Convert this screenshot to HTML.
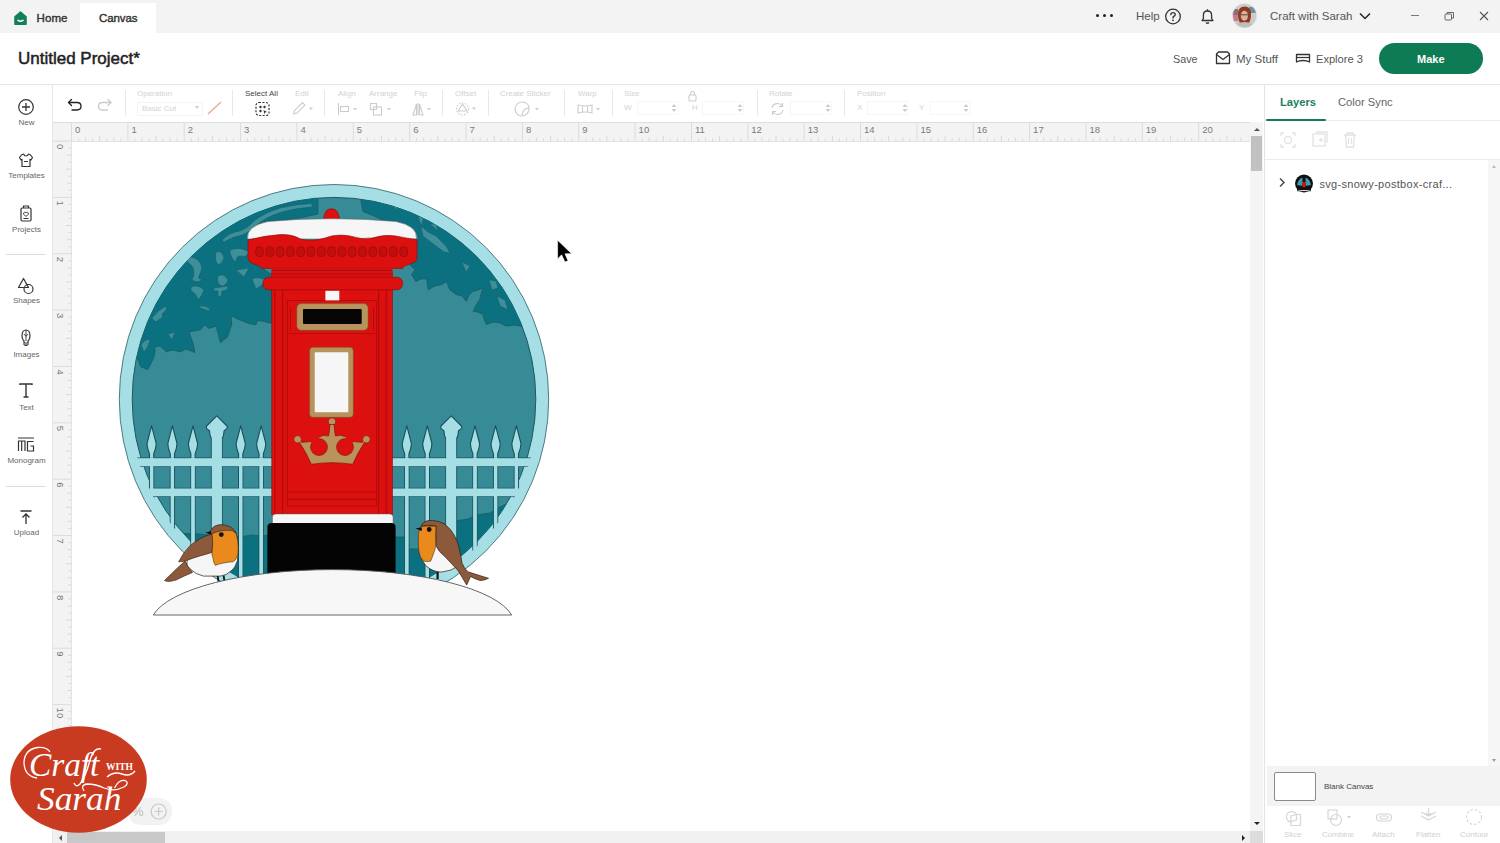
<!DOCTYPE html>
<html><head><meta charset="utf-8">
<style>
*{box-sizing:border-box;margin:0;padding:0}
html,body{width:1500px;height:843px;overflow:hidden;background:#fff;font-family:"Liberation Sans",sans-serif;color:#333}
.a{position:absolute}
.t{position:absolute;white-space:nowrap;line-height:1}
#top{left:0;top:0;width:1500px;height:33px;background:#f3f3f3}
#hdr{left:0;top:33px;width:1500px;height:52px;background:#fff;border-bottom:1px solid #e4e4e4;box-shadow:0 0.5px 1.5px rgba(0,0,0,0.06)}
#tb{left:53px;top:85px;width:1212px;height:37px;background:#fff}
#lp{left:0;top:85px;width:53px;height:759px;background:#fff;border-right:1px solid #e6e6e6}
.lbl{font-size:8px;color:#666;text-align:center;width:53px;left:0}
.tl{font-size:8px;color:#d2d2d2}
.sep{position:absolute;top:90px;width:1px;height:26px;background:#e8e8e8}
</style></head><body>
<!-- top bar -->
<div id="top" class="a"></div>
<div class="a" style="left:80px;top:3px;width:76px;height:30px;background:#fff"></div>
<svg class="a" style="left:13px;top:10px" width="16" height="16" viewBox="0 0 16 16"><path d="M2 6.8 L7.5 2 L13 6.8 V14.2 H2 Z" fill="#12805a" stroke="#12805a" stroke-linejoin="round" stroke-width="1.6"/><path d="M5 10.3 Q7.5 12 10 10.3" stroke="#fff" stroke-width="1.5" fill="none" stroke-linecap="round"/></svg>
<div class="t" style="left:36.5px;top:13px;font-size:11.5px;color:#333;-webkit-text-stroke:0.4px #333;letter-spacing:0.1px">Home</div>
<div class="t" style="left:99px;top:13px;font-size:11.5px;color:#333;-webkit-text-stroke:0.4px #333;letter-spacing:-0.1px">Canvas</div>

<div class="a" style="left:1096px;top:14px;width:3.4px;height:3.4px;border-radius:50%;background:#222"></div>
<div class="a" style="left:1103px;top:14px;width:3.4px;height:3.4px;border-radius:50%;background:#222"></div>
<div class="a" style="left:1109.5px;top:14px;width:3.4px;height:3.4px;border-radius:50%;background:#222"></div>
<div class="t" style="left:1136px;top:11px;font-size:11.5px;color:#555">Help</div>
<svg class="a" style="left:1164px;top:8px" width="18" height="18" viewBox="0 0 18 18"><circle cx="9" cy="8.5" r="7.3" fill="none" stroke="#333" stroke-width="1.3"/><path d="M6.8 6.6 Q6.9 4.6 9 4.6 Q11.2 4.6 11.2 6.5 Q11.2 7.8 9.6 8.5 Q9 8.8 9 10" fill="none" stroke="#333" stroke-width="1.4" stroke-linecap="round"/><circle cx="9" cy="12.3" r="0.9" fill="#333"/></svg>
<svg class="a" style="left:1199px;top:8px" width="17" height="17" viewBox="0 0 17 17"><path d="M3 12.5 H14 L12.6 10.5 V7 Q12.6 3 8.5 3 Q4.4 3 4.4 7 V10.5 Z" fill="none" stroke="#333" stroke-width="1.3" stroke-linejoin="round"/><path d="M7 14.5 Q8.5 16 10 14.5" fill="none" stroke="#333" stroke-width="1.3"/><path d="M8.5 1.2 V3" stroke="#333" stroke-width="1.3"/></svg>
<svg class="a" style="left:1232px;top:3px" width="26" height="26" viewBox="0 0 26 26"><defs><clipPath id="av"><circle cx="12.6" cy="12.7" r="12.2"/></clipPath></defs><g clip-path="url(#av)"><rect width="26" height="26" fill="#cfc9ca"/><rect x="0" y="6" width="6" height="6" fill="#8b6e76"/><rect x="17" y="4" width="7" height="6" fill="#6f8ea0"/><rect x="1" y="12" width="5" height="6" fill="#c77b86"/><path d="M6 11 Q6 3.5 12.6 3.5 Q19 3.5 19 11 Q19 17 17 20 H8 Q6 17 6 11 Z" fill="#8d3b1f"/><ellipse cx="12.4" cy="12.8" rx="3.6" ry="5" fill="#dcaea0"/><path d="M9 11.8 H16" stroke="#5b4540" stroke-width="1"/><path d="M2 26 Q3 19 12.6 19 Q22 19 23 26 Z" fill="#bfbcbc"/></g><circle cx="12.6" cy="12.7" r="12.2" fill="none" stroke="#e6e6e6" stroke-width="0.8"/></svg>
<div class="t" style="left:1270px;top:11px;font-size:11.5px;color:#555">Craft with Sarah</div>
<svg class="a" style="left:1358px;top:11px" width="14" height="10" viewBox="0 0 14 10"><path d="M2 2.5 L7 7.5 L12 2.5" fill="none" stroke="#222" stroke-width="1.5"/></svg>
<div class="a" style="left:1411px;top:15px;width:8px;height:1px;background:#777"></div>
<svg class="a" style="left:1444px;top:11px" width="11" height="10" viewBox="0 0 11 10"><rect x="1" y="3" width="6.5" height="6" rx="1" fill="none" stroke="#666" stroke-width="1"/><path d="M3 3 V1.5 H9.5 V7 H7.5" fill="none" stroke="#666" stroke-width="1"/></svg>
<svg class="a" style="left:1479px;top:11px" width="10" height="10" viewBox="0 0 10 10"><path d="M1 1 L9 9 M9 1 L1 9" stroke="#555" stroke-width="1.1"/></svg>

<!-- header -->
<div id="hdr" class="a"></div>
<div class="t" style="left:18px;top:50px;font-size:17px;color:#222;-webkit-text-stroke:0.5px #222;letter-spacing:0px">Untitled Project*</div>
<div class="t" style="left:1173px;top:54px;font-size:10.8px;color:#555">Save</div>
<svg class="a" style="left:1215px;top:51px" width="16" height="14" viewBox="0 0 16 14"><path d="M1.5 3 V12.5 H14.5 V3 L12.5 1 H3.5 Z" fill="none" stroke="#333" stroke-width="1.3" stroke-linejoin="round"/><path d="M1.5 3.5 L8 8.5 L14.5 3.5" fill="none" stroke="#333" stroke-width="1.3"/></svg>
<div class="t" style="left:1236px;top:54px;font-size:11.5px;color:#555">My Stuff</div>
<svg class="a" style="left:1295px;top:53px" width="16" height="11" viewBox="0 0 16 11"><path d="M1.5 1.5 H14.5 V9 Q12 7.5 8 7.5 Q4 7.5 1.5 9 Z" fill="none" stroke="#333" stroke-width="1.3" stroke-linejoin="round"/><path d="M1.5 4.5 H14.5" stroke="#333" stroke-width="1.2"/></svg>
<div class="t" style="left:1316px;top:54px;font-size:11.1px;color:#555">Explore 3</div>
<div class="a" style="left:1379px;top:43px;width:104px;height:31px;border-radius:16px;background:#0e7b55"></div>
<div class="t" style="left:1417px;top:54px;font-size:11px;font-weight:bold;color:#fff">Make</div>

<!-- left panel -->
<div id="lp" class="a"></div>
<svg class="a" style="left:0;top:84px" width="53" height="460" viewBox="0 84 53 460" fill="none" stroke="#333" stroke-width="1.2">
<circle cx="26" cy="107" r="7.3"/><path d="M26 103 V111 M22 107 H30" stroke-width="1.3"/>
<path d="M21.5 155 L19.5 157.5 L21 160 L22 159.3 V166.5 H30 V159.3 L31 160 L32.5 157.5 L30.5 155 Q29 154 28.5 154 Q27.5 156 26 156 Q24.5 156 23.5 154 Q23 154 21.5 155 Z" stroke-linejoin="round"/><path d="M24 161.5 H28" stroke-width="1"/>
<rect x="21" y="208" width="10" height="13" rx="1.2"/><path d="M23.5 208 V206 H28.5 V208" /><path d="M26 216.5 L23.8 214.3 Q23 212.8 24.5 212.3 Q25.5 212 26 213 Q26.5 212 27.5 212.3 Q29 212.8 28.2 214.3 Z" stroke-width="1"/><path d="M23.5 218.5 H28.5" stroke-width="1"/>
<path d="M23.5 278.5 L18.5 287.5 H28.5 Z" stroke-linejoin="round"/><circle cx="28.5" cy="289" r="4.5" fill="#fff"/><path d="M24.5 287.5 H28.5 L26.3 283.5" stroke-linejoin="round"/>
<path d="M22 336 Q22 330 26 330 Q30 330 30 336 Q30 339 28 341 V343 H24 V341 Q22 339 22 336 Z"/><path d="M24 343.5 V345 H28 V343.5 M25 345.5 H27" stroke-width="1"/><path d="M26 330 V341 M24 334 Q26 338 28 334" stroke-width="0.9"/>
<path d="M20 385 V384 H32 V385 M26 384 V397 M23.5 397 H28.5" stroke-width="1.4"/>
<path d="M18 438 H34" stroke-width="1"/><path d="M18.5 451 V441 H25 V451 M21.7 441 V451" stroke-width="1.2"/><path d="M33.5 441.5 H27.5 V451 H33.5 V446 H30.5" stroke-width="1.2"/>
<path d="M20.5 511 H31.5 M26 524 V514 M22.5 517.5 L26 514 L29.5 517.5" stroke-width="1.3"/>
</svg>
<div class="t lbl" style="top:119px">New</div>
<div class="t lbl" style="top:172px">Templates</div>
<div class="t lbl" style="top:226px">Projects</div>
<div class="a" style="left:6px;top:254px;width:40px;height:1px;background:#ddd"></div>
<div class="t lbl" style="top:297px">Shapes</div>
<div class="t lbl" style="top:351px">Images</div>
<div class="t lbl" style="top:404px">Text</div>
<div class="t lbl" style="top:457px">Monogram</div>
<div class="a" style="left:6px;top:486px;width:40px;height:1px;background:#ddd"></div>
<div class="t lbl" style="top:529px">Upload</div>

<!-- toolbar -->
<div id="tb" class="a"></div>
<svg class="a" style="left:66px;top:97px" width="48" height="16" viewBox="0 0 48 16" fill="none" stroke-linecap="round" stroke-linejoin="round">
<path d="M5.5 2.5 L2.5 5.5 L5.5 8.5" stroke="#222" stroke-width="1.3"/><path d="M2.8 5.5 H11 Q15 5.5 15 9.3 Q15 13 11 13 H6" stroke="#222" stroke-width="1.3"/>
<path d="M42 2.5 L45 5.5 L42 8.5" stroke="#ccc" stroke-width="1.3"/><path d="M44.7 5.5 H36.5 Q32.5 5.5 32.5 9.3 Q32.5 13 36.5 13 H41.5" stroke="#ccc" stroke-width="1.3"/>
</svg>
<div class="sep" style="left:125px"></div>
<div class="t tl" style="left:137px;top:90px">Operation</div>
<div class="a" style="left:137px;top:101.5px;width:66px;height:14px;border:1px solid #f4f4f4;border-radius:2px"></div>
<div class="t tl" style="left:142px;top:105px">Basic Cut</div>
<div class="a" style="left:195px;top:106px;width:0;height:0;border-left:2.5px solid transparent;border-right:2.5px solid transparent;border-top:3px solid #ccc"></div>
<svg class="a" style="left:206px;top:100px" width="17" height="16"><path d="M2 14 L15 2" stroke="#f2a898" stroke-width="1.4"/></svg>
<div class="sep" style="left:232px"></div>
<div class="t" style="left:245px;top:90px;font-size:8px;color:#444">Select All</div>
<svg class="a" style="left:254px;top:101px" width="17" height="16" viewBox="0 0 17 16" fill="none"><rect x="2" y="1.5" width="13" height="13" rx="3" stroke="#333" stroke-width="1.2" stroke-dasharray="2 1.5"/><circle cx="6.5" cy="6" r="1.2" fill="#333"/><circle cx="10.5" cy="6" r="1.2" fill="#333"/><circle cx="6.5" cy="10" r="1.2" fill="#333"/><path d="M9.5 9 L13 11 L11 11.5 L10.5 13.5 Z" fill="#333"/></svg>
<div class="t tl" style="left:295px;top:90px">Edit</div>
<svg class="a" style="left:291px;top:100px" width="24" height="16" viewBox="0 0 24 16" fill="none" stroke="#ccc" stroke-width="1.1"><path d="M2.5 14 L3.5 10.5 L11.5 2.5 L14 5 L6 13 Z"/><path d="M18 7.5 L20 10 L22 7.5 Z" fill="#ccc" stroke="none"/></svg>
<div class="sep" style="left:324px"></div>
<div class="t tl" style="left:338px;top:90px">Align</div>
<div class="t tl" style="left:369px;top:90px">Arrange</div>
<div class="t tl" style="left:414px;top:90px">Flip</div>
<svg class="a" style="left:336px;top:101px" width="100" height="16" viewBox="0 0 100 16" fill="none" stroke="#ccc" stroke-width="1.1">
<path d="M2.5 2 V14"/><rect x="4.5" y="5.5" width="8" height="5"/><path d="M17 7 L19 9.5 L21 7 Z" fill="#ccc" stroke="none"/>
<rect x="34.5" y="2.5" width="6" height="6"/><rect x="37.5" y="6" width="8" height="8"/><path d="M51 7 L53 9.5 L55 7 Z" fill="#ccc" stroke="none"/>
<path d="M82 2 V14 M80.5 3 L77 14 H80.5 Z M83.5 3 L87 14 H83.5 Z"/><path d="M91 7 L93 9.5 L95 7 Z" fill="#ccc" stroke="none"/>
</svg>
<div class="sep" style="left:442px"></div>
<div class="t tl" style="left:455px;top:90px">Offset</div>
<svg class="a" style="left:453px;top:100px" width="26" height="18" viewBox="0 0 26 18" fill="none" stroke="#ccc" stroke-width="1.1"><path d="M5 11 L9.5 4 L14 11 Z"/><circle cx="9.5" cy="9" r="6" stroke-dasharray="1.5 1.5"/><path d="M19 7.5 L21 10 L23 7.5 Z" fill="#ccc" stroke="none"/></svg>
<div class="sep" style="left:488px"></div>
<div class="t tl" style="left:500px;top:90px">Create Sticker</div>
<svg class="a" style="left:513px;top:100px" width="30" height="18" viewBox="0 0 30 18" fill="none" stroke="#ccc" stroke-width="1.1"><path d="M16 9 A7 7 0 1 1 9 2 Q16 2 16 9 Z"/><path d="M16 8 Q10 8 9 15"/><path d="M22 8 L24 10.5 L26 8 Z" fill="#ccc" stroke="none"/></svg>
<div class="sep" style="left:564px"></div>
<div class="t tl" style="left:578px;top:90px">Warp</div>
<svg class="a" style="left:576px;top:100px" width="28" height="18" viewBox="0 0 28 18" fill="none" stroke="#ccc" stroke-width="1.1"><path d="M2 5 Q9 7 16 5 V13 Q9 11 2 13 Z M6.5 6 V12 M11.5 6 V12"/><path d="M20 8 L22 10.5 L24 8 Z" fill="#ccc" stroke="none"/></svg>
<div class="sep" style="left:612px"></div>
<div class="t tl" style="left:624px;top:90px">Size</div>
<div class="t tl" style="left:624px;top:104px">W</div>
<div class="a" style="left:637px;top:101px;width:42px;height:14px;border:1px solid #f6f6f6"></div>
<svg class="a" style="left:670px;top:102px" width="8" height="12"><path d="M1.5 5 L4 2 L6.5 5 Z M1.5 7 L4 10 L6.5 7 Z" fill="#ccc"/></svg>
<svg class="a" style="left:687px;top:90px" width="11" height="12" viewBox="0 0 11 12" fill="none" stroke="#ccc" stroke-width="1.1"><rect x="2" y="5" width="7" height="6" rx="1"/><path d="M3.5 5 V3.5 Q3.5 1.5 5.5 1.5 Q7.5 1.5 7.5 3.5 V5"/></svg>
<div class="t tl" style="left:692px;top:104px">H</div>
<div class="a" style="left:702px;top:101px;width:42px;height:14px;border:1px solid #f6f6f6"></div>
<svg class="a" style="left:736px;top:102px" width="8" height="12"><path d="M1.5 5 L4 2 L6.5 5 Z M1.5 7 L4 10 L6.5 7 Z" fill="#ccc"/></svg>
<div class="sep" style="left:757px"></div>
<div class="t tl" style="left:769px;top:90px">Rotate</div>
<svg class="a" style="left:769px;top:101px" width="17" height="16" viewBox="0 0 17 16" fill="none" stroke="#ccc" stroke-width="1.2"><path d="M3 7 A5.5 5.5 0 0 1 13 5 M14 9 A5.5 5.5 0 0 1 4 11"/><path d="M13.5 2 V5.5 H10 M3.5 14 V10.5 H7"/></svg>
<div class="a" style="left:790px;top:101px;width:42px;height:14px;border:1px solid #f6f6f6"></div>
<svg class="a" style="left:824px;top:102px" width="8" height="12"><path d="M1.5 5 L4 2 L6.5 5 Z M1.5 7 L4 10 L6.5 7 Z" fill="#ccc"/></svg>
<div class="sep" style="left:844px"></div>
<div class="t tl" style="left:857px;top:90px">Position</div>
<div class="t tl" style="left:857px;top:104px">X</div>
<div class="a" style="left:867px;top:101px;width:41px;height:14px;border:1px solid #f6f6f6"></div>
<svg class="a" style="left:901px;top:102px" width="8" height="12"><path d="M1.5 5 L4 2 L6.5 5 Z M1.5 7 L4 10 L6.5 7 Z" fill="#ccc"/></svg>
<div class="t tl" style="left:919px;top:104px">Y</div>
<div class="a" style="left:930px;top:101px;width:41px;height:14px;border:1px solid #f6f6f6"></div>
<svg class="a" style="left:962px;top:102px" width="8" height="12"><path d="M1.5 5 L4 2 L6.5 5 Z M1.5 7 L4 10 L6.5 7 Z" fill="#ccc"/></svg>

<div class="a" style="left:53px;top:122px;width:1197px;height:19px;background:#f3f3f3;border-top:1px solid #dedede"></div>
<div class="a" style="left:53px;top:141px;width:18px;height:690px;background:#f3f3f3"></div>
<svg class="a" style="left:0;top:0" width="1265" height="843" font-family="Liberation Sans"><path d="M71.5 123 V141" stroke="#dcdcdc" stroke-width="1"/><path d="M78.5 138.5 V141" stroke="#d8d8d8" stroke-width="1"/><path d="M85.6 137.5 V141" stroke="#d8d8d8" stroke-width="1"/><path d="M92.6 138.5 V141" stroke="#d8d8d8" stroke-width="1"/><path d="M99.7 136 V141" stroke="#d8d8d8" stroke-width="1"/><path d="M106.7 138.5 V141" stroke="#d8d8d8" stroke-width="1"/><path d="M113.8 137.5 V141" stroke="#d8d8d8" stroke-width="1"/><path d="M120.8 138.5 V141" stroke="#d8d8d8" stroke-width="1"/><text x="75.0" y="132.6" font-size="9.5" fill="#7a7a7a">0</text><path d="M127.9 123 V141" stroke="#dcdcdc" stroke-width="1"/><path d="M134.9 138.5 V141" stroke="#d8d8d8" stroke-width="1"/><path d="M141.9 137.5 V141" stroke="#d8d8d8" stroke-width="1"/><path d="M149.0 138.5 V141" stroke="#d8d8d8" stroke-width="1"/><path d="M156.0 136 V141" stroke="#d8d8d8" stroke-width="1"/><path d="M163.1 138.5 V141" stroke="#d8d8d8" stroke-width="1"/><path d="M170.1 137.5 V141" stroke="#d8d8d8" stroke-width="1"/><path d="M177.2 138.5 V141" stroke="#d8d8d8" stroke-width="1"/><text x="131.4" y="132.6" font-size="9.5" fill="#7a7a7a">1</text><path d="M184.2 123 V141" stroke="#dcdcdc" stroke-width="1"/><path d="M191.3 138.5 V141" stroke="#d8d8d8" stroke-width="1"/><path d="M198.3 137.5 V141" stroke="#d8d8d8" stroke-width="1"/><path d="M205.4 138.5 V141" stroke="#d8d8d8" stroke-width="1"/><path d="M212.4 136 V141" stroke="#d8d8d8" stroke-width="1"/><path d="M219.4 138.5 V141" stroke="#d8d8d8" stroke-width="1"/><path d="M226.5 137.5 V141" stroke="#d8d8d8" stroke-width="1"/><path d="M233.5 138.5 V141" stroke="#d8d8d8" stroke-width="1"/><text x="187.7" y="132.6" font-size="9.5" fill="#7a7a7a">2</text><path d="M240.6 123 V141" stroke="#dcdcdc" stroke-width="1"/><path d="M247.6 138.5 V141" stroke="#d8d8d8" stroke-width="1"/><path d="M254.7 137.5 V141" stroke="#d8d8d8" stroke-width="1"/><path d="M261.7 138.5 V141" stroke="#d8d8d8" stroke-width="1"/><path d="M268.8 136 V141" stroke="#d8d8d8" stroke-width="1"/><path d="M275.8 138.5 V141" stroke="#d8d8d8" stroke-width="1"/><path d="M282.8 137.5 V141" stroke="#d8d8d8" stroke-width="1"/><path d="M289.9 138.5 V141" stroke="#d8d8d8" stroke-width="1"/><text x="244.1" y="132.6" font-size="9.5" fill="#7a7a7a">3</text><path d="M296.9 123 V141" stroke="#dcdcdc" stroke-width="1"/><path d="M304.0 138.5 V141" stroke="#d8d8d8" stroke-width="1"/><path d="M311.0 137.5 V141" stroke="#d8d8d8" stroke-width="1"/><path d="M318.1 138.5 V141" stroke="#d8d8d8" stroke-width="1"/><path d="M325.1 136 V141" stroke="#d8d8d8" stroke-width="1"/><path d="M332.2 138.5 V141" stroke="#d8d8d8" stroke-width="1"/><path d="M339.2 137.5 V141" stroke="#d8d8d8" stroke-width="1"/><path d="M346.3 138.5 V141" stroke="#d8d8d8" stroke-width="1"/><text x="300.4" y="132.6" font-size="9.5" fill="#7a7a7a">4</text><path d="M353.3 123 V141" stroke="#dcdcdc" stroke-width="1"/><path d="M360.3 138.5 V141" stroke="#d8d8d8" stroke-width="1"/><path d="M367.4 137.5 V141" stroke="#d8d8d8" stroke-width="1"/><path d="M374.4 138.5 V141" stroke="#d8d8d8" stroke-width="1"/><path d="M381.5 136 V141" stroke="#d8d8d8" stroke-width="1"/><path d="M388.5 138.5 V141" stroke="#d8d8d8" stroke-width="1"/><path d="M395.6 137.5 V141" stroke="#d8d8d8" stroke-width="1"/><path d="M402.6 138.5 V141" stroke="#d8d8d8" stroke-width="1"/><text x="356.8" y="132.6" font-size="9.5" fill="#7a7a7a">5</text><path d="M409.7 123 V141" stroke="#dcdcdc" stroke-width="1"/><path d="M416.7 138.5 V141" stroke="#d8d8d8" stroke-width="1"/><path d="M423.7 137.5 V141" stroke="#d8d8d8" stroke-width="1"/><path d="M430.8 138.5 V141" stroke="#d8d8d8" stroke-width="1"/><path d="M437.8 136 V141" stroke="#d8d8d8" stroke-width="1"/><path d="M444.9 138.5 V141" stroke="#d8d8d8" stroke-width="1"/><path d="M451.9 137.5 V141" stroke="#d8d8d8" stroke-width="1"/><path d="M459.0 138.5 V141" stroke="#d8d8d8" stroke-width="1"/><text x="413.2" y="132.6" font-size="9.5" fill="#7a7a7a">6</text><path d="M466.0 123 V141" stroke="#dcdcdc" stroke-width="1"/><path d="M473.1 138.5 V141" stroke="#d8d8d8" stroke-width="1"/><path d="M480.1 137.5 V141" stroke="#d8d8d8" stroke-width="1"/><path d="M487.2 138.5 V141" stroke="#d8d8d8" stroke-width="1"/><path d="M494.2 136 V141" stroke="#d8d8d8" stroke-width="1"/><path d="M501.2 138.5 V141" stroke="#d8d8d8" stroke-width="1"/><path d="M508.3 137.5 V141" stroke="#d8d8d8" stroke-width="1"/><path d="M515.3 138.5 V141" stroke="#d8d8d8" stroke-width="1"/><text x="469.5" y="132.6" font-size="9.5" fill="#7a7a7a">7</text><path d="M522.4 123 V141" stroke="#dcdcdc" stroke-width="1"/><path d="M529.4 138.5 V141" stroke="#d8d8d8" stroke-width="1"/><path d="M536.5 137.5 V141" stroke="#d8d8d8" stroke-width="1"/><path d="M543.5 138.5 V141" stroke="#d8d8d8" stroke-width="1"/><path d="M550.6 136 V141" stroke="#d8d8d8" stroke-width="1"/><path d="M557.6 138.5 V141" stroke="#d8d8d8" stroke-width="1"/><path d="M564.6 137.5 V141" stroke="#d8d8d8" stroke-width="1"/><path d="M571.7 138.5 V141" stroke="#d8d8d8" stroke-width="1"/><text x="525.9" y="132.6" font-size="9.5" fill="#7a7a7a">8</text><path d="M578.7 123 V141" stroke="#dcdcdc" stroke-width="1"/><path d="M585.8 138.5 V141" stroke="#d8d8d8" stroke-width="1"/><path d="M592.8 137.5 V141" stroke="#d8d8d8" stroke-width="1"/><path d="M599.9 138.5 V141" stroke="#d8d8d8" stroke-width="1"/><path d="M606.9 136 V141" stroke="#d8d8d8" stroke-width="1"/><path d="M614.0 138.5 V141" stroke="#d8d8d8" stroke-width="1"/><path d="M621.0 137.5 V141" stroke="#d8d8d8" stroke-width="1"/><path d="M628.1 138.5 V141" stroke="#d8d8d8" stroke-width="1"/><text x="582.2" y="132.6" font-size="9.5" fill="#7a7a7a">9</text><path d="M635.1 123 V141" stroke="#dcdcdc" stroke-width="1"/><path d="M642.1 138.5 V141" stroke="#d8d8d8" stroke-width="1"/><path d="M649.2 137.5 V141" stroke="#d8d8d8" stroke-width="1"/><path d="M656.2 138.5 V141" stroke="#d8d8d8" stroke-width="1"/><path d="M663.3 136 V141" stroke="#d8d8d8" stroke-width="1"/><path d="M670.3 138.5 V141" stroke="#d8d8d8" stroke-width="1"/><path d="M677.4 137.5 V141" stroke="#d8d8d8" stroke-width="1"/><path d="M684.4 138.5 V141" stroke="#d8d8d8" stroke-width="1"/><text x="638.6" y="132.6" font-size="9.5" fill="#7a7a7a">10</text><path d="M691.5 123 V141" stroke="#dcdcdc" stroke-width="1"/><path d="M698.5 138.5 V141" stroke="#d8d8d8" stroke-width="1"/><path d="M705.6 137.5 V141" stroke="#d8d8d8" stroke-width="1"/><path d="M712.6 138.5 V141" stroke="#d8d8d8" stroke-width="1"/><path d="M719.6 136 V141" stroke="#d8d8d8" stroke-width="1"/><path d="M726.7 138.5 V141" stroke="#d8d8d8" stroke-width="1"/><path d="M733.7 137.5 V141" stroke="#d8d8d8" stroke-width="1"/><path d="M740.8 138.5 V141" stroke="#d8d8d8" stroke-width="1"/><text x="695.0" y="132.6" font-size="9.5" fill="#7a7a7a">11</text><path d="M747.8 123 V141" stroke="#dcdcdc" stroke-width="1"/><path d="M754.9 138.5 V141" stroke="#d8d8d8" stroke-width="1"/><path d="M761.9 137.5 V141" stroke="#d8d8d8" stroke-width="1"/><path d="M769.0 138.5 V141" stroke="#d8d8d8" stroke-width="1"/><path d="M776.0 136 V141" stroke="#d8d8d8" stroke-width="1"/><path d="M783.0 138.5 V141" stroke="#d8d8d8" stroke-width="1"/><path d="M790.1 137.5 V141" stroke="#d8d8d8" stroke-width="1"/><path d="M797.1 138.5 V141" stroke="#d8d8d8" stroke-width="1"/><text x="751.3" y="132.6" font-size="9.5" fill="#7a7a7a">12</text><path d="M804.2 123 V141" stroke="#dcdcdc" stroke-width="1"/><path d="M811.2 138.5 V141" stroke="#d8d8d8" stroke-width="1"/><path d="M818.3 137.5 V141" stroke="#d8d8d8" stroke-width="1"/><path d="M825.3 138.5 V141" stroke="#d8d8d8" stroke-width="1"/><path d="M832.4 136 V141" stroke="#d8d8d8" stroke-width="1"/><path d="M839.4 138.5 V141" stroke="#d8d8d8" stroke-width="1"/><path d="M846.4 137.5 V141" stroke="#d8d8d8" stroke-width="1"/><path d="M853.5 138.5 V141" stroke="#d8d8d8" stroke-width="1"/><text x="807.7" y="132.6" font-size="9.5" fill="#7a7a7a">13</text><path d="M860.5 123 V141" stroke="#dcdcdc" stroke-width="1"/><path d="M867.6 138.5 V141" stroke="#d8d8d8" stroke-width="1"/><path d="M874.6 137.5 V141" stroke="#d8d8d8" stroke-width="1"/><path d="M881.7 138.5 V141" stroke="#d8d8d8" stroke-width="1"/><path d="M888.7 136 V141" stroke="#d8d8d8" stroke-width="1"/><path d="M895.8 138.5 V141" stroke="#d8d8d8" stroke-width="1"/><path d="M902.8 137.5 V141" stroke="#d8d8d8" stroke-width="1"/><path d="M909.9 138.5 V141" stroke="#d8d8d8" stroke-width="1"/><text x="864.0" y="132.6" font-size="9.5" fill="#7a7a7a">14</text><path d="M916.9 123 V141" stroke="#dcdcdc" stroke-width="1"/><path d="M923.9 138.5 V141" stroke="#d8d8d8" stroke-width="1"/><path d="M931.0 137.5 V141" stroke="#d8d8d8" stroke-width="1"/><path d="M938.0 138.5 V141" stroke="#d8d8d8" stroke-width="1"/><path d="M945.1 136 V141" stroke="#d8d8d8" stroke-width="1"/><path d="M952.1 138.5 V141" stroke="#d8d8d8" stroke-width="1"/><path d="M959.2 137.5 V141" stroke="#d8d8d8" stroke-width="1"/><path d="M966.2 138.5 V141" stroke="#d8d8d8" stroke-width="1"/><text x="920.4" y="132.6" font-size="9.5" fill="#7a7a7a">15</text><path d="M973.3 123 V141" stroke="#dcdcdc" stroke-width="1"/><path d="M980.3 138.5 V141" stroke="#d8d8d8" stroke-width="1"/><path d="M987.4 137.5 V141" stroke="#d8d8d8" stroke-width="1"/><path d="M994.4 138.5 V141" stroke="#d8d8d8" stroke-width="1"/><path d="M1001.4 136 V141" stroke="#d8d8d8" stroke-width="1"/><path d="M1008.5 138.5 V141" stroke="#d8d8d8" stroke-width="1"/><path d="M1015.5 137.5 V141" stroke="#d8d8d8" stroke-width="1"/><path d="M1022.6 138.5 V141" stroke="#d8d8d8" stroke-width="1"/><text x="976.8" y="132.6" font-size="9.5" fill="#7a7a7a">16</text><path d="M1029.6 123 V141" stroke="#dcdcdc" stroke-width="1"/><path d="M1036.7 138.5 V141" stroke="#d8d8d8" stroke-width="1"/><path d="M1043.7 137.5 V141" stroke="#d8d8d8" stroke-width="1"/><path d="M1050.8 138.5 V141" stroke="#d8d8d8" stroke-width="1"/><path d="M1057.8 136 V141" stroke="#d8d8d8" stroke-width="1"/><path d="M1064.8 138.5 V141" stroke="#d8d8d8" stroke-width="1"/><path d="M1071.9 137.5 V141" stroke="#d8d8d8" stroke-width="1"/><path d="M1078.9 138.5 V141" stroke="#d8d8d8" stroke-width="1"/><text x="1033.1" y="132.6" font-size="9.5" fill="#7a7a7a">17</text><path d="M1086.0 123 V141" stroke="#dcdcdc" stroke-width="1"/><path d="M1093.0 138.5 V141" stroke="#d8d8d8" stroke-width="1"/><path d="M1100.1 137.5 V141" stroke="#d8d8d8" stroke-width="1"/><path d="M1107.1 138.5 V141" stroke="#d8d8d8" stroke-width="1"/><path d="M1114.2 136 V141" stroke="#d8d8d8" stroke-width="1"/><path d="M1121.2 138.5 V141" stroke="#d8d8d8" stroke-width="1"/><path d="M1128.2 137.5 V141" stroke="#d8d8d8" stroke-width="1"/><path d="M1135.3 138.5 V141" stroke="#d8d8d8" stroke-width="1"/><text x="1089.5" y="132.6" font-size="9.5" fill="#7a7a7a">18</text><path d="M1142.3 123 V141" stroke="#dcdcdc" stroke-width="1"/><path d="M1149.4 138.5 V141" stroke="#d8d8d8" stroke-width="1"/><path d="M1156.4 137.5 V141" stroke="#d8d8d8" stroke-width="1"/><path d="M1163.5 138.5 V141" stroke="#d8d8d8" stroke-width="1"/><path d="M1170.5 136 V141" stroke="#d8d8d8" stroke-width="1"/><path d="M1177.6 138.5 V141" stroke="#d8d8d8" stroke-width="1"/><path d="M1184.6 137.5 V141" stroke="#d8d8d8" stroke-width="1"/><path d="M1191.7 138.5 V141" stroke="#d8d8d8" stroke-width="1"/><text x="1145.8" y="132.6" font-size="9.5" fill="#7a7a7a">19</text><path d="M1198.7 123 V141" stroke="#dcdcdc" stroke-width="1"/><path d="M1205.7 138.5 V141" stroke="#d8d8d8" stroke-width="1"/><path d="M1212.8 137.5 V141" stroke="#d8d8d8" stroke-width="1"/><path d="M1219.8 138.5 V141" stroke="#d8d8d8" stroke-width="1"/><path d="M1226.9 136 V141" stroke="#d8d8d8" stroke-width="1"/><path d="M1233.9 138.5 V141" stroke="#d8d8d8" stroke-width="1"/><path d="M1241.0 137.5 V141" stroke="#d8d8d8" stroke-width="1"/><text x="1202.2" y="132.6" font-size="9.5" fill="#7a7a7a">20</text><path d="M53 141.0 H71" stroke="#dcdcdc" stroke-width="1"/><path d="M68.5 148.0 H71" stroke="#d8d8d8" stroke-width="1"/><path d="M67.5 155.1 H71" stroke="#d8d8d8" stroke-width="1"/><path d="M68.5 162.1 H71" stroke="#d8d8d8" stroke-width="1"/><path d="M66 169.2 H71" stroke="#d8d8d8" stroke-width="1"/><path d="M68.5 176.2 H71" stroke="#d8d8d8" stroke-width="1"/><path d="M67.5 183.3 H71" stroke="#d8d8d8" stroke-width="1"/><path d="M68.5 190.3 H71" stroke="#d8d8d8" stroke-width="1"/><text transform="translate(56.5 144.0) rotate(90)" font-size="9.5" fill="#777">0</text><path d="M53 197.4 H71" stroke="#dcdcdc" stroke-width="1"/><path d="M68.5 204.4 H71" stroke="#d8d8d8" stroke-width="1"/><path d="M67.5 211.5 H71" stroke="#d8d8d8" stroke-width="1"/><path d="M68.5 218.5 H71" stroke="#d8d8d8" stroke-width="1"/><path d="M66 225.5 H71" stroke="#d8d8d8" stroke-width="1"/><path d="M68.5 232.6 H71" stroke="#d8d8d8" stroke-width="1"/><path d="M67.5 239.6 H71" stroke="#d8d8d8" stroke-width="1"/><path d="M68.5 246.7 H71" stroke="#d8d8d8" stroke-width="1"/><text transform="translate(56.5 200.4) rotate(90)" font-size="9.5" fill="#777">1</text><path d="M53 253.7 H71" stroke="#dcdcdc" stroke-width="1"/><path d="M68.5 260.8 H71" stroke="#d8d8d8" stroke-width="1"/><path d="M67.5 267.8 H71" stroke="#d8d8d8" stroke-width="1"/><path d="M68.5 274.9 H71" stroke="#d8d8d8" stroke-width="1"/><path d="M66 281.9 H71" stroke="#d8d8d8" stroke-width="1"/><path d="M68.5 288.9 H71" stroke="#d8d8d8" stroke-width="1"/><path d="M67.5 296.0 H71" stroke="#d8d8d8" stroke-width="1"/><path d="M68.5 303.0 H71" stroke="#d8d8d8" stroke-width="1"/><text transform="translate(56.5 256.7) rotate(90)" font-size="9.5" fill="#777">2</text><path d="M53 310.1 H71" stroke="#dcdcdc" stroke-width="1"/><path d="M68.5 317.1 H71" stroke="#d8d8d8" stroke-width="1"/><path d="M67.5 324.2 H71" stroke="#d8d8d8" stroke-width="1"/><path d="M68.5 331.2 H71" stroke="#d8d8d8" stroke-width="1"/><path d="M66 338.3 H71" stroke="#d8d8d8" stroke-width="1"/><path d="M68.5 345.3 H71" stroke="#d8d8d8" stroke-width="1"/><path d="M67.5 352.3 H71" stroke="#d8d8d8" stroke-width="1"/><path d="M68.5 359.4 H71" stroke="#d8d8d8" stroke-width="1"/><text transform="translate(56.5 313.1) rotate(90)" font-size="9.5" fill="#777">3</text><path d="M53 366.4 H71" stroke="#dcdcdc" stroke-width="1"/><path d="M68.5 373.5 H71" stroke="#d8d8d8" stroke-width="1"/><path d="M67.5 380.5 H71" stroke="#d8d8d8" stroke-width="1"/><path d="M68.5 387.6 H71" stroke="#d8d8d8" stroke-width="1"/><path d="M66 394.6 H71" stroke="#d8d8d8" stroke-width="1"/><path d="M68.5 401.7 H71" stroke="#d8d8d8" stroke-width="1"/><path d="M67.5 408.7 H71" stroke="#d8d8d8" stroke-width="1"/><path d="M68.5 415.8 H71" stroke="#d8d8d8" stroke-width="1"/><text transform="translate(56.5 369.4) rotate(90)" font-size="9.5" fill="#777">4</text><path d="M53 422.8 H71" stroke="#dcdcdc" stroke-width="1"/><path d="M68.5 429.8 H71" stroke="#d8d8d8" stroke-width="1"/><path d="M67.5 436.9 H71" stroke="#d8d8d8" stroke-width="1"/><path d="M68.5 443.9 H71" stroke="#d8d8d8" stroke-width="1"/><path d="M66 451.0 H71" stroke="#d8d8d8" stroke-width="1"/><path d="M68.5 458.0 H71" stroke="#d8d8d8" stroke-width="1"/><path d="M67.5 465.1 H71" stroke="#d8d8d8" stroke-width="1"/><path d="M68.5 472.1 H71" stroke="#d8d8d8" stroke-width="1"/><text transform="translate(56.5 425.8) rotate(90)" font-size="9.5" fill="#777">5</text><path d="M53 479.2 H71" stroke="#dcdcdc" stroke-width="1"/><path d="M68.5 486.2 H71" stroke="#d8d8d8" stroke-width="1"/><path d="M67.5 493.2 H71" stroke="#d8d8d8" stroke-width="1"/><path d="M68.5 500.3 H71" stroke="#d8d8d8" stroke-width="1"/><path d="M66 507.3 H71" stroke="#d8d8d8" stroke-width="1"/><path d="M68.5 514.4 H71" stroke="#d8d8d8" stroke-width="1"/><path d="M67.5 521.4 H71" stroke="#d8d8d8" stroke-width="1"/><path d="M68.5 528.5 H71" stroke="#d8d8d8" stroke-width="1"/><text transform="translate(56.5 482.2) rotate(90)" font-size="9.5" fill="#777">6</text><path d="M53 535.5 H71" stroke="#dcdcdc" stroke-width="1"/><path d="M68.5 542.6 H71" stroke="#d8d8d8" stroke-width="1"/><path d="M67.5 549.6 H71" stroke="#d8d8d8" stroke-width="1"/><path d="M68.5 556.7 H71" stroke="#d8d8d8" stroke-width="1"/><path d="M66 563.7 H71" stroke="#d8d8d8" stroke-width="1"/><path d="M68.5 570.7 H71" stroke="#d8d8d8" stroke-width="1"/><path d="M67.5 577.8 H71" stroke="#d8d8d8" stroke-width="1"/><path d="M68.5 584.8 H71" stroke="#d8d8d8" stroke-width="1"/><text transform="translate(56.5 538.5) rotate(90)" font-size="9.5" fill="#777">7</text><path d="M53 591.9 H71" stroke="#dcdcdc" stroke-width="1"/><path d="M68.5 598.9 H71" stroke="#d8d8d8" stroke-width="1"/><path d="M67.5 606.0 H71" stroke="#d8d8d8" stroke-width="1"/><path d="M68.5 613.0 H71" stroke="#d8d8d8" stroke-width="1"/><path d="M66 620.1 H71" stroke="#d8d8d8" stroke-width="1"/><path d="M68.5 627.1 H71" stroke="#d8d8d8" stroke-width="1"/><path d="M67.5 634.1 H71" stroke="#d8d8d8" stroke-width="1"/><path d="M68.5 641.2 H71" stroke="#d8d8d8" stroke-width="1"/><text transform="translate(56.5 594.9) rotate(90)" font-size="9.5" fill="#777">8</text><path d="M53 648.2 H71" stroke="#dcdcdc" stroke-width="1"/><path d="M68.5 655.3 H71" stroke="#d8d8d8" stroke-width="1"/><path d="M67.5 662.3 H71" stroke="#d8d8d8" stroke-width="1"/><path d="M68.5 669.4 H71" stroke="#d8d8d8" stroke-width="1"/><path d="M66 676.4 H71" stroke="#d8d8d8" stroke-width="1"/><path d="M68.5 683.5 H71" stroke="#d8d8d8" stroke-width="1"/><path d="M67.5 690.5 H71" stroke="#d8d8d8" stroke-width="1"/><path d="M68.5 697.6 H71" stroke="#d8d8d8" stroke-width="1"/><text transform="translate(56.5 651.2) rotate(90)" font-size="9.5" fill="#777">9</text><path d="M53 704.6 H71" stroke="#dcdcdc" stroke-width="1"/><path d="M68.5 711.6 H71" stroke="#d8d8d8" stroke-width="1"/><path d="M67.5 718.7 H71" stroke="#d8d8d8" stroke-width="1"/><path d="M68.5 725.7 H71" stroke="#d8d8d8" stroke-width="1"/><path d="M66 732.8 H71" stroke="#d8d8d8" stroke-width="1"/><path d="M68.5 739.8 H71" stroke="#d8d8d8" stroke-width="1"/><path d="M67.5 746.9 H71" stroke="#d8d8d8" stroke-width="1"/><path d="M68.5 753.9 H71" stroke="#d8d8d8" stroke-width="1"/><text transform="translate(56.5 707.6) rotate(90)" font-size="9.5" fill="#777">10</text><path d="M53 761.0 H71" stroke="#dcdcdc" stroke-width="1"/><path d="M68.5 768.0 H71" stroke="#d8d8d8" stroke-width="1"/><path d="M67.5 775.1 H71" stroke="#d8d8d8" stroke-width="1"/><path d="M68.5 782.1 H71" stroke="#d8d8d8" stroke-width="1"/><path d="M66 789.1 H71" stroke="#d8d8d8" stroke-width="1"/><path d="M68.5 796.2 H71" stroke="#d8d8d8" stroke-width="1"/><path d="M67.5 803.2 H71" stroke="#d8d8d8" stroke-width="1"/><path d="M68.5 810.3 H71" stroke="#d8d8d8" stroke-width="1"/><text transform="translate(56.5 764.0) rotate(90)" font-size="9.5" fill="#777">11</text><path d="M53 817.3 H71" stroke="#dcdcdc" stroke-width="1"/><path d="M68.5 824.4 H71" stroke="#d8d8d8" stroke-width="1"/><text transform="translate(56.5 820.3) rotate(90)" font-size="9.5" fill="#777">12</text></svg>
<div class="a" style="left:71px;top:141px;width:1px;height:690px;background:#e2e2e2"></div>
<div class="a" style="left:53px;top:140.5px;width:1197px;height:1px;background:#e2e2e2"></div>
<div class="a" style="left:1250px;top:122px;width:13px;height:709px;background:#f4f4f4"></div>
<div class="a" style="left:1251px;top:135.5px;width:11px;height:35px;background:#c1c1c1"></div>
<div class="a" style="left:1253.5px;top:127.5px;width:0;height:0;border-left:3px solid transparent;border-right:3px solid transparent;border-bottom:3.5px solid #555"></div>
<div class="a" style="left:1253.5px;top:822px;width:0;height:0;border-left:3px solid transparent;border-right:3px solid transparent;border-top:3.5px solid #222"></div>
<div class="a" style="left:53px;top:831px;width:1197px;height:12px;background:#f0f0f0"></div>
<div class="a" style="left:67px;top:832px;width:98px;height:11px;background:#c8c8c8"></div>
<div class="a" style="left:59px;top:834.5px;width:0;height:0;border-top:3px solid transparent;border-bottom:3px solid transparent;border-right:3.5px solid #555"></div>
<div class="a" style="left:1242px;top:834.5px;width:0;height:0;border-top:3px solid transparent;border-bottom:3px solid transparent;border-left:3.5px solid #222"></div>
<div class="a" style="left:1250px;top:831px;width:13px;height:12px;background:#dcdcdc"></div>
<div class="a" style="left:1264px;top:85px;width:236px;height:758px;background:#fff;border-left:1px solid #e3e3e3"></div>
<div class="t" style="left:1280px;top:97px;font-size:11.2px;font-weight:bold;color:#1b7f5e">Layers</div>
<div class="t" style="left:1338px;top:97px;font-size:11.2px;color:#666">Color Sync</div>
<div class="a" style="left:1265px;top:120px;width:235px;height:1px;background:#ececec"></div>
<div class="a" style="left:1266px;top:118.5px;width:60px;height:2.5px;background:#137a55;border-radius:1px"></div>
<svg class="a" style="left:1278px;top:130px" width="84" height="20" viewBox="0 0 84 20" fill="none" stroke="#e2e2e2" stroke-width="1.3">
<path d="M3 6 V3 H6 M14 3 H17 V6 M17 14 V17 H14 M6 17 H3 V14"/><circle cx="10" cy="10" r="3.5"/>
<rect x="35" y="4" width="12" height="12"/><path d="M38 2 H49 V13" /><path d="M41 10 H45 M43 8 V12"/>
<path d="M66 5 H78 M69 5 V3 H75 V5 M67.5 5 L68.5 17 H75.5 L76.5 5 M70.5 8 V14 M73.5 8 V14"/>
</svg>
<div class="a" style="left:1265px;top:159px;width:235px;height:1px;background:#ececec"></div>
<div class="a" style="left:1488px;top:160px;width:12px;height:606px;background:#f6f6f6"></div>
<div class="a" style="left:1491.5px;top:165px;width:0;height:0;border-left:2.5px solid transparent;border-right:2.5px solid transparent;border-bottom:3px solid #bbb"></div>
<div class="a" style="left:1491.5px;top:759px;width:0;height:0;border-left:2.5px solid transparent;border-right:2.5px solid transparent;border-top:3px solid #999"></div>
<svg class="a" style="left:1278px;top:177px" width="8" height="11"><path d="M2 1.5 L6 5.5 L2 9.5" fill="none" stroke="#444" stroke-width="1.4"/></svg>
<svg class="a" style="left:1294px;top:174px" width="20" height="20" viewBox="0 0 20 20"><circle cx="10" cy="9.5" r="9" fill="#111"/><path d="M3 11 Q4 5 8.5 3.5 V12 Z M17 11 Q16 5 11.5 3.5 V12 Z" fill="#3d9aa8"/><rect x="8.5" y="8" width="3" height="5" fill="#d11"/><rect x="3" y="14" width="14" height="3.5" fill="#111"/><path d="M2.5 17.5 Q10 15.5 17.5 17.5" stroke="#eee" stroke-width="1.2" fill="none"/></svg>
<div class="t" style="left:1319.5px;top:179px;font-size:11px;letter-spacing:0.3px;color:#555">svg-snowy-postbox-craf...</div>
<div class="a" style="left:1267px;top:766px;width:233px;height:40px;background:#f3f3f3"></div>
<div class="a" style="left:1274px;top:772px;width:42px;height:28.5px;background:#fff;border:1px solid #8a8a8a;border-radius:2px"></div>
<div class="t" style="left:1324px;top:783px;font-size:8px;color:#444">Blank Canvas</div>
<svg class="a" style="left:1280px;top:806px" width="220" height="24" viewBox="0 0 220 24" fill="none" stroke="#d6d6d6" stroke-width="1.2">
<path d="M10 16 Q6 14 6.5 10 Q7 6 11.5 5.5 Q15 5.5 16.5 8.5 H20.5 V19.5 H11 V16 Z"/><path d="M11 15.5 V10 L16.5 8.5 V14 Z"/>
<rect x="48" y="4" width="9" height="9"/><circle cx="56" cy="14" r="5.5"/><path d="M67 10 L69 12.5 L71 10 Z" fill="#ccc" stroke="none"/>
<rect x="96.5" y="8" width="15" height="7" rx="3.5"/><rect x="100" y="10" width="8" height="3" rx="1.5"/>
<path d="M141 6 L148.5 10 L156 6 M141 10 L148.5 14 L156 10 M148.5 2 V10 M146 7 L148.5 10 L151 7"/>
<circle cx="194" cy="11" r="7.5" stroke-dasharray="2.5 2"/>
</svg>
<div class="t" style="left:1284px;top:831px;font-size:8px;color:#d0d0d0">Slice</div>
<div class="t" style="left:1322px;top:831px;font-size:8px;color:#d0d0d0">Combine</div>
<div class="t" style="left:1372px;top:831px;font-size:8px;color:#d0d0d0">Attach</div>
<div class="t" style="left:1416px;top:831px;font-size:8px;color:#d0d0d0">Flatten</div>
<div class="t" style="left:1460px;top:831px;font-size:8px;color:#d0d0d0">Contour</div>
<!--ILLUS-->
<svg class="a" style="left:0;top:0" width="600" height="640" viewBox="0 0 600 640">
<defs><clipPath id="ci"><circle cx="334.0" cy="399.2" r="201.8"/></clipPath><clipPath id="ci2"><circle cx="334.0" cy="399.2" r="205.3"/></clipPath></defs>
<circle cx="334.0" cy="399.2" r="214.7" fill="#a6dee6" stroke="#4d7b81" stroke-width="1"/>
<circle cx="334.0" cy="399.2" r="201.8" fill="#378b96" stroke="#1d5a62" stroke-width="1"/>
<g clip-path="url(#ci)">
<path d="M110,190 L300,188 L318,190 L318,214 L300,218 L262,222 L248,240 L250,262 L262,268 L272,275 L271.6,323.4 L262,321 L257.4,320.5 L256,324.8 L248.8,323.4 L237.5,319 L231,315.5 L231.8,324 L227.5,336.9 L220.4,342.6 L218,333 L216.1,326.2 L209,328.4 L204.7,324.8 L200.4,329.8 L189,331.9 L193.3,344 L194.8,352.6 L186,349 L180.5,351.8 L172,350 L166.3,351.8 L160,346 L154.9,346.9 L155,352 L153.5,358.3 L147.8,369.6 L140.7,366.8 L136.4,355.4 L110,350 Z" fill="#0b7181" stroke="#1d5a62" stroke-width="0.8"/>
<path d="M358,185 L363,211.4 L375.6,216.7 L418.3,236.3 L414.7,259.4 L410,264.8 L415,269.8 L411.6,274.7 L415.8,281.4 L421,279 L426.6,278.9 L428.2,289.7 L435,286 L441.5,284.7 L446.5,281.4 L449.8,289.7 L456.5,294.7 L462,296 L466.4,301.3 L469,295 L473.1,291.3 L478,290 L483,288 L481,294 L479.7,299.7 L476,305 L473.1,311.3 L478,312 L483,314.6 L484,319 L486.4,324.6 L493,322 L499.7,322.9 L504,325 L508,326.2 L514,325 L521.3,326.2 L570,330 L570,185 Z" fill="#0b7181" stroke="#1d5a62" stroke-width="0.8"/>
<path d="M222,240 Q230,232 240,231 Q248,228 254,221 Q264,213 280,208 Q296,204 312,203.5 L312,207 Q296,208 282,212 Q266,217 258,224 Q250,232 242,235 Q232,237 224,242 Z" fill="#3d8f99" stroke="#1d5a62" stroke-width="0.5"/>
<path d="M184,258 Q192,255 198,260 Q204,266 200,274 Q196,280 203,279 Q198,284 192,280 Q196,272 192,266 Q188,262 184,258 Z" fill="#3d8f99" stroke="#1d5a62" stroke-width="0.5"/>
<path d="M216,252 Q222,250 224,258 Q222,264 218,265 Q214,260 216,252 Z" fill="#3d8f99" stroke="#1d5a62" stroke-width="0.5"/>
<path d="M230,250 Q240,246 249,252 Q246,258 240,256 Q236,256 236,262 Q230,258 230,250 Z" fill="#3d8f99" stroke="#1d5a62" stroke-width="0.5"/>
<path d="M236,270 L249,268 L244,277 Z" fill="#3d8f99" stroke="#1d5a62" stroke-width="0.5"/>
<path d="M218,276 Q224,273 228,280 Q226,286 221,286 Q216,282 218,276 Z" fill="#3d8f99" stroke="#1d5a62" stroke-width="0.5"/>
<path d="M191,287 Q198,284 204,290 Q202,296 198,300 Q196,293 191,291 Z" fill="#3d8f99" stroke="#1d5a62" stroke-width="0.5"/>
<path d="M214,288 L228,286 L227,290 L222,291 L221,297 L218,296 L218,291 L214,291 Z" fill="#3d8f99" stroke="#1d5a62" stroke-width="0.5"/>
<path d="M200,306 Q205,305 210,309 L209,311 Q204,309 200,308 Z" fill="#3d8f99" stroke="#1d5a62" stroke-width="0.5"/>
<path d="M152,318 Q158,310 166,306 Q168,310 162,314 Q164,318 158,320 Q156,324 152,318 Z" fill="#3d8f99" stroke="#1d5a62" stroke-width="0.5"/>
<path d="M252,279 Q258,276 266,280 Q262,286 256,289 Q254,284 252,279 Z" fill="#3d8f99" stroke="#1d5a62" stroke-width="0.5"/>
<path d="M168,334 L175,332 L172,340 Z" fill="#3d8f99" stroke="#1d5a62" stroke-width="0.5"/>
<path d="M141,345 Q146,338 150,340 Q148,348 144,352 Z" fill="#3d8f99" stroke="#1d5a62" stroke-width="0.5"/>
<path d="M392,204 L400,202 L396,210 Z" fill="#3d8f99" stroke="#1d5a62" stroke-width="0.5"/>
<path d="M421,226 L428,232 L436,236 L446,246 L450,253 L444,252 L436,246 L428,240 L423,236 Z" fill="#3d8f99" stroke="#1d5a62" stroke-width="0.5"/>
<path d="M418,216 L424,217 L421,226 Z" fill="#3d8f99" stroke="#1d5a62" stroke-width="0.5"/>
<path d="M430,224 L436,224 L438,231 Z" fill="#3d8f99" stroke="#1d5a62" stroke-width="0.5"/>
<path d="M489,280 L496,281 L498,288 L492,290 Z" fill="#3d8f99" stroke="#1d5a62" stroke-width="0.5"/>
<path d="M497,296 L505,300 L508,310 L500,306 Z" fill="#3d8f99" stroke="#1d5a62" stroke-width="0.5"/>
<path d="M462,262 L470,266 L466,272 Z" fill="#3d8f99" stroke="#1d5a62" stroke-width="0.5"/>
<path d="M110,537 L150,536 L170,533 L200,534 L215,536 L240,537 L252,535 L262,536 L275,534 L396,537 L405,537 L408,549 L424,549 L440,532 L455,521 L468,519 L476,515 L490,513 L498,508 L508,503 L520,500 L570,500 L570,640 L110,640 Z" fill="#0b7181" stroke="#1d5a62" stroke-width="0.8"/>
</g>
<g clip-path="url(#ci2)" fill="#a6dee6" stroke="#185058" stroke-width="1.1" stroke-linejoin="round">
<path d="M149.5,600 L149.5,454 Q147.0,448 147.0,443.5 L151.6,425.8 L156.2,443.5 Q156.2,448 153.7,454 L153.7,600 Z"/>
<path d="M170.3,600 L170.3,454 Q167.8,448 167.8,443.5 L172.4,425.8 L177.0,443.5 Q177.0,448 174.5,454 L174.5,600 Z"/>
<path d="M190.9,600 L190.9,454 Q188.4,448 188.4,443.5 L193.0,425.8 L197.6,443.5 Q197.6,448 195.1,454 L195.1,600 Z"/>
<path d="M238.6,600 L238.6,454 Q236.1,448 236.1,443.5 L240.7,425.8 L245.29999999999998,443.5 Q245.29999999999998,448 242.79999999999998,454 L242.79999999999998,600 Z"/>
<path d="M259.09999999999997,600 L259.09999999999997,454 Q256.59999999999997,448 256.59999999999997,443.5 L261.2,425.8 L265.8,443.5 Q265.8,448 263.3,454 L263.3,600 Z"/>
<path d="M514.3,600 L514.3,454 Q511.79999999999995,448 511.79999999999995,443.5 L516.4,425.8 L521.0,443.5 Q521.0,448 518.5,454 L518.5,600 Z"/>
<path d="M493.5,600 L493.5,454 Q491.0,448 491.0,443.5 L495.6,425.8 L500.20000000000005,443.5 Q500.20000000000005,448 497.70000000000005,454 L497.70000000000005,600 Z"/>
<path d="M472.9,600 L472.9,454 Q470.4,448 470.4,443.5 L475.0,425.8 L479.6,443.5 Q479.6,448 477.1,454 L477.1,600 Z"/>
<path d="M425.2,600 L425.2,454 Q422.7,448 422.7,443.5 L427.3,425.8 L431.90000000000003,443.5 Q431.90000000000003,448 429.40000000000003,454 L429.40000000000003,600 Z"/>
<path d="M404.7,600 L404.7,454 Q402.2,448 402.2,443.5 L406.8,425.8 L411.40000000000003,443.5 Q411.40000000000003,448 408.90000000000003,454 L408.90000000000003,600 Z"/>
<path d="M211.4,600 L211.4,438 Q209.8,436.5 209.60000000000002,431 L208.3,429.8 Q205.60000000000002,428.5 206.60000000000002,426 L216.8,415.8 L227.0,426 Q228.0,428.5 225.3,429.8 L224.0,431 Q223.8,436.5 222.20000000000002,438 L222.20000000000002,600 Z"/>
<path d="M445.8,600 L445.8,438 Q444.2,436.5 444.0,431 L442.7,429.8 Q440.0,428.5 441.0,426 L451.2,415.8 L461.4,426 Q462.4,428.5 459.7,429.8 L458.4,431 Q458.2,436.5 456.59999999999997,438 L456.59999999999997,600 Z"/>
<rect x="100" y="458" width="172" height="8.2"/><rect x="100" y="488.2" width="172" height="8"/>
<rect x="392" y="458" width="170" height="8.2"/><rect x="392" y="488.2" width="170" height="8"/>
<rect x="149.9" y="457.4" width="3.4000000000000004" height="143" stroke="none"/>
<rect x="170.70000000000002" y="457.4" width="3.4000000000000004" height="143" stroke="none"/>
<rect x="191.3" y="457.4" width="3.4000000000000004" height="143" stroke="none"/>
<rect x="239.0" y="457.4" width="3.4000000000000004" height="143" stroke="none"/>
<rect x="259.49999999999994" y="457.4" width="3.4000000000000004" height="143" stroke="none"/>
<rect x="514.6999999999999" y="457.4" width="3.4000000000000004" height="143" stroke="none"/>
<rect x="493.9" y="457.4" width="3.4000000000000004" height="143" stroke="none"/>
<rect x="473.29999999999995" y="457.4" width="3.4000000000000004" height="143" stroke="none"/>
<rect x="425.59999999999997" y="457.4" width="3.4000000000000004" height="143" stroke="none"/>
<rect x="405.09999999999997" y="457.4" width="3.4000000000000004" height="143" stroke="none"/>
<rect x="211.8" y="437" width="10.0" height="163" stroke="none"/>
<rect x="446.2" y="437" width="10.0" height="163" stroke="none"/>
<rect x="100" y="458.4" width="172" height="7.8" stroke="none"/><rect x="100" y="488.6" width="172" height="7.6" stroke="none"/>
<rect x="392" y="458.4" width="170" height="7.8" stroke="none"/><rect x="392" y="488.6" width="170" height="7.6" stroke="none"/>
</g>
</svg>
<svg class="a" style="left:0;top:0" width="600" height="640" viewBox="0 0 600 640">
<path d="M323.5,222 Q323.5,208.7 331.5,208.7 Q339.5,208.7 339.5,222 Z" fill="#dd1010" stroke="#8a0a0a" stroke-width="0.6"/>
<path d="M247.5,239 Q246,226 268,221.5 Q300,218.5 332,218.7 Q364,218.5 396,221.5 Q418,226 416.5,239 Z" fill="#f6f6f6" stroke="#666" stroke-width="0.6"/>
<rect x="271.8" y="272" width="120.6" height="243" fill="#dd1010" stroke="#8a0a0a" stroke-width="0.6"/>
<path d="M248,240 Q262,236 280,234.6 Q292,234 300.5,239 Q312,242 325,238 Q336,233.5 350,236 Q362,240 372,238 Q384,234 396,236 Q408,238.5 417,239.5 L417,258.3 Q417,262 410,264 Q404,265.5 402.5,268.4 L262,268.4 Q260.5,265.5 254,264 Q248,262 248,258.3 Z" fill="#dd1010" stroke="#8a0a0a" stroke-width="0.6"/>
<rect x="255.7" y="246.7" width="7.6" height="9.8" rx="3.2" fill="#c30e0e" stroke="#9a0b0b" stroke-width="0.7"/>
<rect x="266.0" y="246.7" width="7.6" height="9.8" rx="3.2" fill="#c30e0e" stroke="#9a0b0b" stroke-width="0.7"/>
<rect x="276.3" y="246.7" width="7.6" height="9.8" rx="3.2" fill="#c30e0e" stroke="#9a0b0b" stroke-width="0.7"/>
<rect x="286.6" y="246.7" width="7.6" height="9.8" rx="3.2" fill="#c30e0e" stroke="#9a0b0b" stroke-width="0.7"/>
<rect x="296.9" y="246.7" width="7.6" height="9.8" rx="3.2" fill="#c30e0e" stroke="#9a0b0b" stroke-width="0.7"/>
<rect x="307.2" y="246.7" width="7.6" height="9.8" rx="3.2" fill="#c30e0e" stroke="#9a0b0b" stroke-width="0.7"/>
<rect x="317.5" y="246.7" width="7.6" height="9.8" rx="3.2" fill="#c30e0e" stroke="#9a0b0b" stroke-width="0.7"/>
<rect x="327.8" y="246.7" width="7.6" height="9.8" rx="3.2" fill="#c30e0e" stroke="#9a0b0b" stroke-width="0.7"/>
<rect x="338.1" y="246.7" width="7.6" height="9.8" rx="3.2" fill="#c30e0e" stroke="#9a0b0b" stroke-width="0.7"/>
<rect x="348.4" y="246.7" width="7.6" height="9.8" rx="3.2" fill="#c30e0e" stroke="#9a0b0b" stroke-width="0.7"/>
<rect x="358.7" y="246.7" width="7.6" height="9.8" rx="3.2" fill="#c30e0e" stroke="#9a0b0b" stroke-width="0.7"/>
<rect x="369.0" y="246.7" width="7.6" height="9.8" rx="3.2" fill="#c30e0e" stroke="#9a0b0b" stroke-width="0.7"/>
<rect x="379.3" y="246.7" width="7.6" height="9.8" rx="3.2" fill="#c30e0e" stroke="#9a0b0b" stroke-width="0.7"/>
<rect x="389.6" y="246.7" width="7.6" height="9.8" rx="3.2" fill="#c30e0e" stroke="#9a0b0b" stroke-width="0.7"/>
<rect x="399.9" y="246.7" width="7.6" height="9.8" rx="3.2" fill="#c30e0e" stroke="#9a0b0b" stroke-width="0.7"/>
<rect x="271.5" y="268.4" width="121" height="9" fill="#dd1010"/>
<path d="M271.5,270.5 H392.5 M271.5,274 H392.5" stroke="#b00c0c" stroke-width="1.2"/>
<rect x="263" y="277.2" width="139.5" height="12.6" rx="5.5" fill="#dd1010" stroke="#8a0a0a" stroke-width="0.6"/>
<path d="M274.8,290 V514" stroke="#b00c0c" stroke-width="1.3"/>
<path d="M282.6,290 V514" stroke="#b00c0c" stroke-width="1.3"/>
<path d="M386.4,290 V514" stroke="#b00c0c" stroke-width="1.3"/>
<path d="M378.6,290 V514" stroke="#b00c0c" stroke-width="1.3"/>
<path d="M287.3,300.5 V506 H376.7 V300.5" fill="none" stroke="#b00c0c" stroke-width="1"/>
<path d="M287,300.5 H377" stroke="#b00c0c" stroke-width="1"/>
<path d="M287,333.5 H377" stroke="#b00c0c" stroke-width="0.8"/>
<path d="M287,492 H377 M287,499.4 H377" stroke="#b00c0c" stroke-width="1.2"/>
<path d="M290.5,308 V330 M373.5,308 V330" stroke="#b00c0c" stroke-width="1"/>
<rect x="325.4" y="290.8" width="13.9" height="9.6" fill="#f6f6f6"/>
<rect x="296.8" y="303.6" width="71.3" height="26.7" rx="4.5" fill="#b8935b" stroke="#6b5530" stroke-width="0.5"/>
<rect x="303" y="309" width="58.7" height="15" rx="1" fill="#050505"/>
<rect x="309.6" y="347.3" width="43.7" height="70" rx="3.5" fill="#b8935b" stroke="#6b5530" stroke-width="0.5"/>
<rect x="314.7" y="352.3" width="33.6" height="60" rx="1" fill="#f6f6f6"/>
<circle cx="297.6" cy="439.3" r="3.8" fill="#b8935b" stroke="#8f0c0c" stroke-width="0.7"/><circle cx="366.4" cy="439.3" r="3.8" fill="#b8935b" stroke="#8f0c0c" stroke-width="0.7"/><circle cx="332" cy="421.6" r="3.8" fill="#b8935b" stroke="#8f0c0c" stroke-width="0.7"/>
<path d="M311.4,464.3 Q332,461 352.7,464.3 Q358,452 364.5,442.5 L353.3,441.6 L345.8,436.8 Q340,434 335.5,436 L334.8,432 L334,424.5 L330,424.5 L329.2,432 L328.5,436 Q324,434 318.3,437.5 L310.7,441.6 L299.5,442.5 Q306,452 311.4,464.3 Z" fill="#b8935b" stroke="#8f0c0c" stroke-width="0.7" stroke-linejoin="round"/>
<path d="M297,440.5 L301.5,443.5 L299,438 Z M367,440.5 L362.5,443.5 L365,438 Z" fill="#b8935b"/>
<circle cx="319" cy="447.1" r="8.4" fill="#dd1010" stroke="#8f0c0c" stroke-width="0.7"/><circle cx="345" cy="447.1" r="8.4" fill="#dd1010" stroke="#8f0c0c" stroke-width="0.7"/>
<path d="M319,447.1 L306.01,439.60 L317.43,432.18 Z M345,447.1 L346.57,432.18 L357.99,439.60 Z" fill="#dd1010"/>
<path d="M272.4,523.5 V517 Q272.4,513.9 276,513.9 H389.5 Q393.1,513.9 393.1,517 V523.5 Z" fill="#f6f6f6" stroke="#555" stroke-width="0.5"/>
<path d="M267.4,575 V527 Q267.4,523 272,523 H391 Q395.6,523 395.6,527 V575 Z" fill="#040404"/>
</svg>
<svg class="a" style="left:0;top:0" width="600" height="640" viewBox="0 0 600 640">
<path d="M217.5,575 L218.5,581.5 M223.5,575 L224.5,581.5" stroke="#111" stroke-width="1.8"/>
<path d="M185,561 Q175,570 164.5,580.5 Q168,582.5 176,580 Q184,576 192.5,572.5 Z" fill="#8c5a3a" stroke="#2a1a10" stroke-width="0.6"/>
<path d="M210.7,531 Q213,525 221.3,524.8 Q233,525.5 236.2,533.4 Q239.5,546 237.4,560.7 Q235,568 232,570.2 Q226,576 220.2,576.1 L203.5,576.1 Q195,574 191.7,570.2 Q186,566 187,561.8 Q189,552 200,545 Q208,540 210.7,534.6 Z" fill="#f6f6f6" stroke="#2a1a10" stroke-width="0.7"/>
<path d="M210.8,534 Q213,528 221,528 Q231,527.5 236.2,533.4 Q239.5,546 237.4,555.9 Q236,560 233.2,561.8 Q228,562 223.7,563 Q218,564 215.4,565.4 Q213,562 213,558.3 Q211.5,555 211.9,551.2 L210.8,540 Z" fill="#ea891c" stroke="#2a1a10" stroke-width="0.5"/>
<path d="M210.7,531 Q213,525 221.3,524.8 Q233,525.5 236.2,533.4 Q233,530.5 230.8,530.4 Q225,530 220.2,531 Q214,532.5 210.7,534.6 Z" fill="#8c5a3a" stroke="#2a1a10" stroke-width="0.5"/>
<path d="M212,534 Q206,535.5 201.2,538.1 Q194,542 189.3,546.4 Q183,553 178.6,561.8 Q182,562 185.8,560.7 Q193,558 200,555.9 Q207,554 211.9,552.4 Q213.5,544 212,534 Z" fill="#8c5a3a" stroke="#2a1a10" stroke-width="0.6"/>
<path d="M205.3,532.8 L211,531 L211,534.6 Z" fill="#111"/>
<circle cx="221.3" cy="534.6" r="2.4" fill="#111"/>
<path d="M437.6,571 V579" stroke="#111" stroke-width="2.2"/>
<path d="M419,536 Q417.5,556 426,566 Q434,572.5 442,572 Q452,571 458,566 Q460,552 452,538 Q444,528 436,526 Z" fill="#f6f6f6" stroke="#2a1a10" stroke-width="0.7"/>
<path d="M421.1,526.1 Q417.5,533 418.3,538.5 Q418,548 419.2,552.7 Q420.5,559 424,561.2 Q427,562 430.6,561.2 Q433,556 435.4,548 L436.3,526.1 Z" fill="#ea891c" stroke="#2a1a10" stroke-width="0.5"/>
<path d="M421.1,526.1 Q423,520 432.5,520.4 Q440,521 444.9,524.2 Q451,529 454.4,535.6 Q458,542 459.1,548 Q461,556 462,563.1 Q464,568 467.7,571.7 Q478,575 488.5,578.3 Q484,580.8 480,580.4 Q475,579 470.5,576.5 L466.7,585 Q462,577 458.2,570.7 Q451,563 444.9,556.5 Q438,551 436.3,546 Q435.5,536 436.3,526.1 Q430,524.5 421.1,526.1 Z" fill="#8c5a3a" stroke="#2a1a10" stroke-width="0.7"/>
<path d="M415.4,528.5 L421.8,527.3 L421.8,531 Z" fill="#111"/>
<circle cx="429.2" cy="529.5" r="2.4" fill="#111"/>
<path d="M153.3,615 A182,55 0 0 1 511.7,615 Z" fill="#f7f7f7" stroke="#555" stroke-width="0.9"/>
</svg>
<!--/ILLUS-->
<!--LOGO-->
<svg class="a" style="left:545px;top:230px" width="40" height="40" viewBox="545 230 40 40"><path d="M557.6,240.2 L557.6,258.9 L561.6,254.8 L565,262 L568,260.8 L565,253.8 L571.6,253.7 Z" fill="#000" stroke="#fff" stroke-width="0.6"/></svg>
<div class="a" style="left:128px;top:798px;width:44px;height:27px;border-radius:13px;background:#f2f2f2"></div>
<div class="t" style="left:132px;top:805px;font-size:13px;color:#bbb">%</div>
<svg class="a" style="left:149px;top:802px" width="20" height="20" viewBox="0 0 20 20"><circle cx="9.7" cy="9.5" r="7.5" fill="none" stroke="#c8c8c8" stroke-width="1.2"/><path d="M9.7 5.5 V13.5 M5.7 9.5 H13.7" stroke="#c8c8c8" stroke-width="1.2"/></svg>
<svg class="a" style="left:0;top:715px" width="160" height="128" viewBox="0 715 160 128">
<ellipse cx="78.5" cy="779.5" rx="68.3" ry="53.2" fill="#c93b20"/>
<text id="lc" x="0" y="0" transform="translate(29 776) scale(0.98 1)" font-family="Liberation Serif" font-style="italic" font-size="34" fill="#fff">Craft</text>
<path d="M37 778 Q24 776 24 762 Q25 749 38 747.5 Q47 747 50 752" fill="none" stroke="#fff" stroke-width="1.3"/>
<path d="M101 749 Q94 747 90 760 Q86 776 80 784 Q76 788 74 783" fill="none" stroke="#fff" stroke-width="1.4"/>
<text id="lw" x="106" y="770" font-family="Liberation Serif" font-size="9.5" font-weight="bold" fill="#fff">WITH</text>
<path d="M107 777 Q114 771 122 774 Q130 777 135 771" fill="none" stroke="#fff" stroke-width="1.4"/>
<path d="M84 791 Q80 785 87 784 Q96 784 104 788 Q114 792 124 787 Q130 783 125 780.5 Q119 779 114.5 788" fill="none" stroke="#fff" stroke-width="1.3"/>
<text id="ls" x="0" y="0" transform="translate(37 810) scale(1.04 1)" font-family="Liberation Serif" font-style="italic" font-size="34" fill="#fff">Sarah</text>

</svg>
</body></html>
